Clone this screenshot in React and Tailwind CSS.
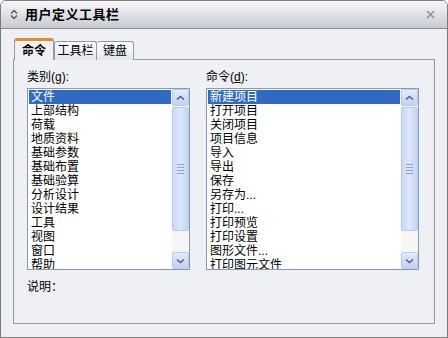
import React from 'react';

const categories = ['文件', '上部结构', '荷载', '地质资料', '基础参数', '基础布置', '基础验算', '分析设计', '设计结果', '工具', '视图', '窗口', '帮助'];
const commands = ['新建项目', '打开项目', '关闭项目', '项目信息', '导入', '导出', '保存', '另存为...', '打印...', '打印预览', '打印设置', '图形文件...', '打印图元文件'];

function ScrollButton({ down }) {
  return (
    <div className="h-[17px] w-[17px] flex items-center justify-center rounded-[2px] border border-[#b9c9ef] bg-gradient-to-b from-[#e3ebfd] to-[#c0d1f5]">
      <svg width="9" height="6" viewBox="0 0 9 6">
        <path
          d={down ? 'M1 1.5L4.5 4.5L8 1.5' : 'M1 4.5L4.5 1.5L8 4.5'}
          stroke="#4d6185"
          strokeWidth="1.6"
          fill="none"
        />
      </svg>
    </div>
  );
}

function Scrollbar() {
  return (
    <div className="w-[17px] h-full flex flex-col bg-[#f6f6f4]">
      <ScrollButton />
      <div className="h-[124px] mt-[1px] flex flex-col items-center justify-center gap-[2px] rounded-[2px] border border-[#b9c9ef] bg-gradient-to-r from-[#cad8f8] via-[#dde6fb] to-[#c5d4f5]">
        <div className="w-[7px] h-[1px] bg-[#8ea3cf]" />
        <div className="w-[7px] h-[1px] bg-[#8ea3cf]" />
        <div className="w-[7px] h-[1px] bg-[#8ea3cf]" />
        <div className="w-[7px] h-[1px] bg-[#8ea3cf]" />
      </div>
      <div className="flex-1" />
      <ScrollButton down />
    </div>
  );
}

function ListBox({ items, width }) {
  return (
    <div className={`${width} h-[182px] flex border border-[#7f9db9] bg-white overflow-hidden`}>
      <div className="flex-1 p-[1px] overflow-hidden">
        {items.map((item, i) => (
          <div
            key={item}
            className={`h-[14px] leading-[14px] pl-[2px] text-[12px] whitespace-nowrap ${
              i === 0 ? 'bg-[#316ac5] text-white' : 'text-black'
            }`}
          >
            {item}
          </div>
        ))}
      </div>
      <Scrollbar />
    </div>
  );
}

export default function App() {
  return (
    <div
      className="w-[448px] h-[338px] flex flex-col bg-[#eef0f4] border border-[#7b7b7b] rounded-t-[6px] overflow-hidden text-black"
      style={{ fontFamily: '"Liberation Sans", "Noto Sans CJK SC", sans-serif' }}
    >
      {/* Title bar */}
      <div className="h-[28px] shrink-0 flex items-center px-[9px] border-b border-[#8c8c8c] bg-gradient-to-b from-[#f8f8fa] to-[#c7cad3]">
        <svg width="8" height="11" viewBox="0 0 8 11" className="mr-[7px]">
          <path d="M1 4.5L4 1.5L7 4.5M1 6.5L4 9.5L7 6.5" stroke="#555" strokeWidth="1.4" fill="none" />
        </svg>
        <span className="text-[13px] font-bold tracking-[0.5px]">用户定义工具栏</span>
        <svg width="9" height="9" viewBox="0 0 9 9" className="ml-auto mr-[3px]">
          <path d="M1 1L8 8M8 1L1 8" stroke="#8d8f95" strokeWidth="1.5" />
        </svg>
      </div>

      {/* Body */}
      <div className="flex-1 flex flex-col pl-[12px] pr-[12px] pt-[10px] pb-[13px]">
        {/* Tabs */}
        <div className="flex items-end h-[21px] relative z-10 -mb-[1px] pl-[1px]">
          <div className="h-[22px] w-[40px] flex items-center justify-center text-[12px] font-bold bg-[#eef0f4] border-x border-[#8e99b2] border-t-[3px] border-t-[#e68b2c] rounded-t-[3px]">
            命令
          </div>
          <div className="h-[19px] w-[43px] flex items-center justify-center text-[12px] border border-b-0 border-[#8e99b2] rounded-t-[3px] bg-gradient-to-b from-white to-[#e4e6ec]">
            工具栏
          </div>
          <div className="h-[19px] w-[37px] flex items-center justify-center text-[12px] border border-b-0 border-l-0 border-[#8e99b2] rounded-t-[3px] bg-gradient-to-b from-white to-[#e4e6ec]">
            键盘
          </div>
        </div>

        {/* Panel */}
        <div className="flex-1 border border-[#8e99b2] bg-[#eef0f4] pl-[13px] pt-[10px]">
          <div className="flex gap-[16px]">
            <div className="flex flex-col">
              <div className="h-[14px] leading-[14px] text-[12px] mb-[4px]">
                类别(<span className="underline">g</span>):
              </div>
              <ListBox items={categories} width="w-[163px]" />
            </div>
            <div className="flex flex-col">
              <div className="h-[14px] leading-[14px] text-[12px] mb-[4px]">
                命令(<span className="underline">d</span>):
              </div>
              <ListBox items={commands} width="w-[213px]" />
            </div>
          </div>
          <div className="mt-[10px] h-[14px] leading-[14px] text-[12px]">说明：</div>
        </div>
      </div>
    </div>
  );
}
